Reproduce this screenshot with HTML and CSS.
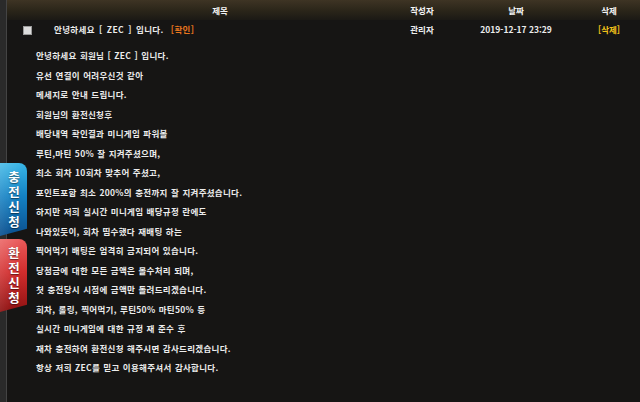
FILE: index.html
```html
<!DOCTYPE html>
<html lang="ko">
<head>
<meta charset="utf-8">
<title>게시판</title>
<link rel="stylesheet" href="styles.css">
</head>
<body>
<div class="page">
  <div class="rail"></div>
  <div class="main">
    <div class="board-head">
      <span class="c-check"></span>
      <span class="c-title">제목</span>
      <span class="c-author">작성자</span>
      <span class="c-date">날짜</span>
      <span class="c-del">삭제</span>
    </div>
    <div class="board-row">
      <span class="c-check"><span class="checkbox"></span></span>
      <span class="c-title left">안녕하세요 [ ZEC ] 입니다. <span class="confirm">[확인]</span></span>
      <span class="c-author">관리자</span>
      <span class="c-date">2019-12-17 23:29</span>
      <span class="c-del"><span class="delete">[삭제]</span></span>
    </div>
    <div class="post">
      <p>안녕하세요 회원님 [ ZEC ] 입니다.</p>
      <p>유선 연결이 어려우신것 같아</p>
      <p>메세지로 안내 드립니다.</p>
      <p>회원님의 환전신청후</p>
      <p>배당내역 확인결과 미니게임 파워볼</p>
      <p>루틴,마틴 50% 잘 지켜주셨으며,</p>
      <p>최소 회차 10회차 맞추어 주셨고,</p>
      <p>포인트포함 최소 200%의 충전까지 잘 지켜주셨습니다.</p>
      <p>하지만 저희 실시간 미니게임 배당규정 란에도</p>
      <p>나와있듯이, 회차 띰수했다 재배팅 하는</p>
      <p>찍어먹기 배팅은 엄격히 금지되어 있습니다.</p>
      <p>당첨금에 대한 모든 금액은 몰수처리 되며,</p>
      <p>첫 충전당시 시점에 금액만 돌려드리겠습니다.</p>
      <p>회차, 롤링, 찍어먹기, 루틴50% 마틴50% 등</p>
      <p>실시간 미니게임에 대한 규정 재 준수 후</p>
      <p>재차 충전하여 환전신청 해주시면 감사드리겠습니다.</p>
      <p>항상 저희 ZEC를 믿고 이용해주셔서 감사합니다.</p>
    </div>
  </div>
</div>
<div class="side-tabs">
  <a class="tab tab-charge" href="#"><span class="tab-label">충전신청</span></a>
  <a class="tab tab-exchange" href="#"><span class="tab-label">환전신청</span></a>
</div>
</body>
</html>
```
FILE: styles.css
```css
html, body {
  margin: 0;
  padding: 0;
  background: #161514;
  width: 640px;
  height: 402px;
  overflow: hidden;
}
body {
  font-family: "Noto Sans CJK KR", "Noto Sans", sans-serif;
  font-weight: 700;
  font-size: 8.5px;
  color: #ececec;
}
.page {
  display: flex;
  height: 402px;
}
.rail {
  width: 6px;
  flex: none;
  background: #2a2a2a;
  border-right: 1px solid #444444;
}
.main {
  flex: 1;
  display: flex;
  flex-direction: column;
}
.board-head,
.board-row {
  display: grid;
  grid-template-columns: 41px 344px 60px 128px 58px;
  align-items: center;
}
.board-head {
  height: 20px;
  background: linear-gradient(#3e3424, #2a2519 55%, #1b1915);
  color: #f4f4f4;
}
.board-row {
  height: 18px;
}
.board-head span,
.board-row > span {
  text-align: center;
  white-space: nowrap;
}
.board-row > .left {
  text-align: left;
  padding-left: 6px;
  letter-spacing: 0.35px;
  word-spacing: 1.5px;
}
.checkbox {
  display: inline-block;
  width: 7px;
  height: 7px;
  background: #dcdcdc;
  border: 1px solid #9a9a9a;
  vertical-align: middle;
}
.confirm {
  color: #e8761e;
  margin-left: 3px;
  word-spacing: 0;
}
.delete {
  color: #f2c21a;
}
.post {
  padding: 8px 0 0 29px;
}
.post p {
  margin: 0;
  line-height: 19.5px;
  white-space: nowrap;
  letter-spacing: 0.3px;
  word-spacing: 0.6px;
}
.side-tabs {
  position: absolute;
  left: 0;
  top: 163px;
  display: flex;
  flex-direction: column;
  gap: 3px;
}
.tab {
  display: flex;
  justify-content: center;
  width: 27px;
  height: 73px;
  box-sizing: border-box;
  padding-top: 8px;
  border-top-right-radius: 8px;
  clip-path: polygon(0 0, 100% 0, 100% 90%, 0 100%);
  color: #ffffff;
  text-decoration: none;
  text-shadow: 0 1px 1px rgba(0, 0, 0, 0.5);
}
.tab-label {
  writing-mode: vertical-rl;
  text-orientation: upright;
  font-size: 12.5px;
  line-height: 14px;
  letter-spacing: 2.5px;
  font-weight: 700;
}
.tab-charge {
  background: linear-gradient(100deg, rgba(255,255,255,0.18), rgba(255,255,255,0) 60%),
              linear-gradient(#38b6e6, #1482c4 45%, #0b4f8e);
}
.tab-exchange {
  background: linear-gradient(100deg, rgba(255,255,255,0.18), rgba(255,255,255,0) 60%),
              linear-gradient(#ea5a5a, #d22d2d 45%, #8e1212);
}
```
